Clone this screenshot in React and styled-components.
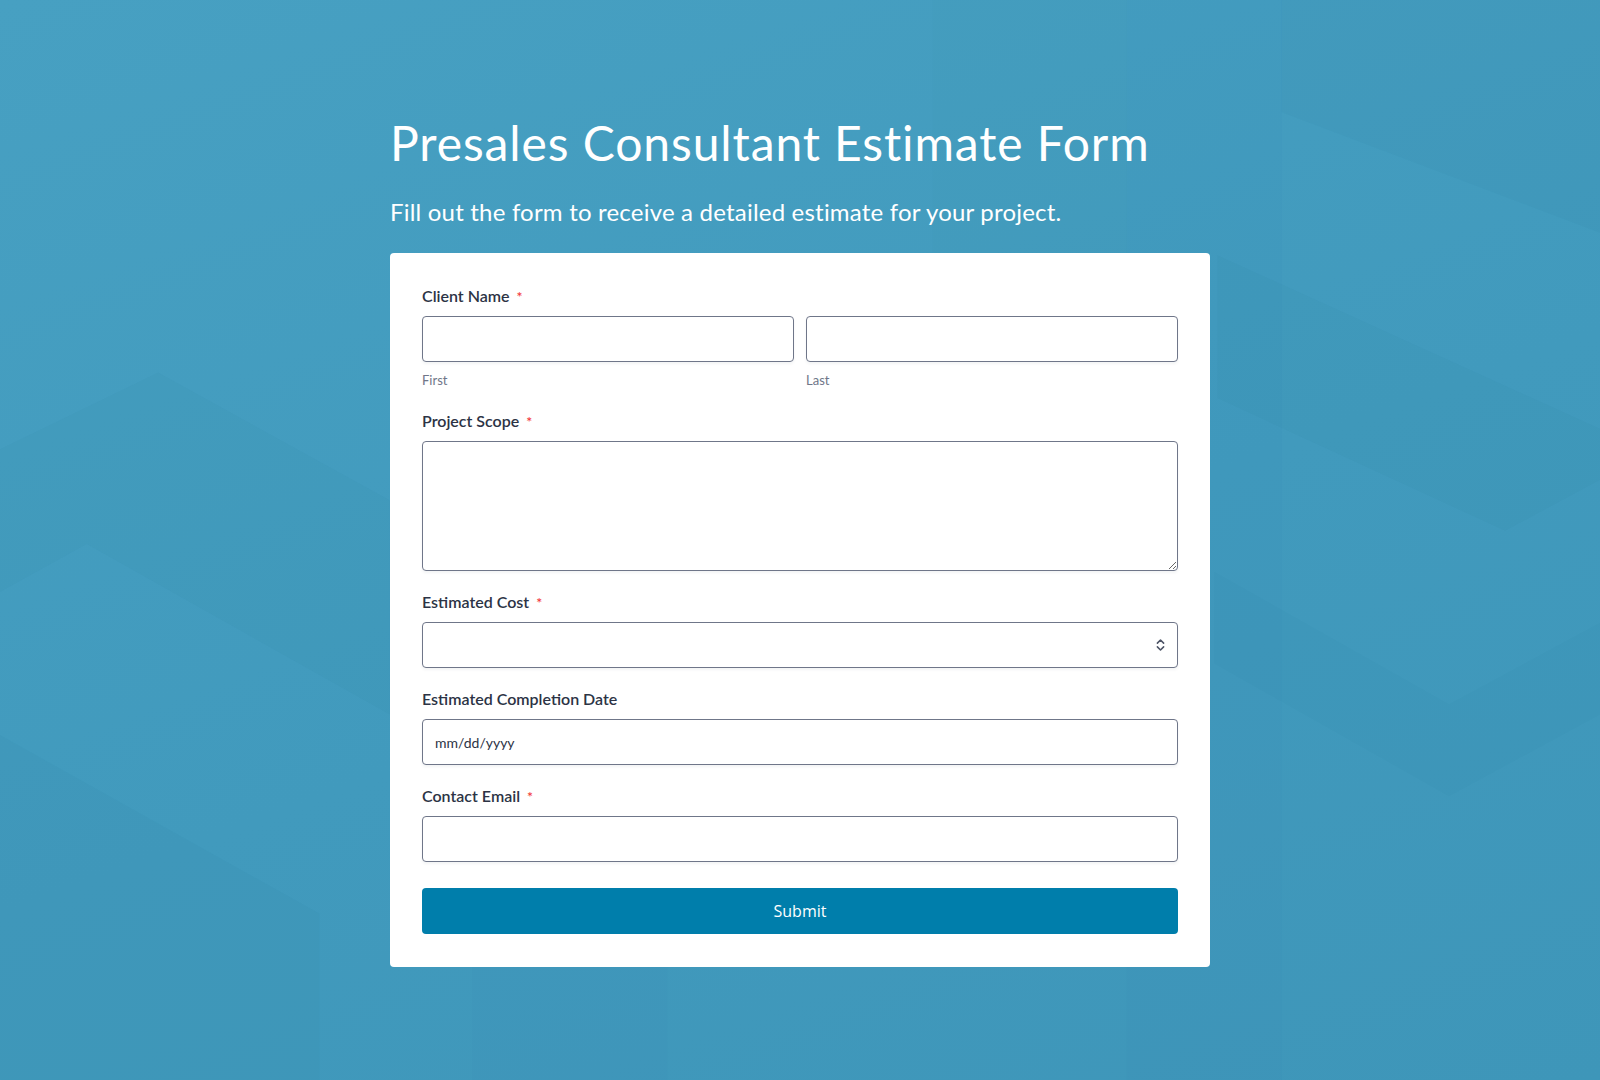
import React from 'react'
import styled, { createGlobalStyle } from 'styled-components'
import { ChevronsUpDown } from 'lucide-react'

const GlobalStyle = createGlobalStyle`
  * { box-sizing: border-box; }
  html, body { margin: 0; padding: 0; }
  body {
    font-family: Lato, "Noto Sans", sans-serif;
    background: #439cbf;
  }
`

const Page = styled.div`
  position: relative;
  min-height: 1080px;
  overflow: hidden;
  background: linear-gradient(160deg, #47a0c2 0%, #419abd 55%, #3e96b9 100%);
`

const Backdrop = styled.svg`
  position: absolute;
  inset: 0;
  width: 100%;
  height: 100%;
  pointer-events: none;
`

const Wrapper = styled.main`
  position: relative;
  width: 820px;
  margin: 0 auto;
  padding: 114px 0 110px;
`

const Title = styled.h1`
  margin: 0;
  font-size: 48px;
  line-height: 1.2;
  font-weight: 400;
  letter-spacing: 0.9px;
  color: #fff;
`

const Subtitle = styled.p`
  margin: 26px 0 27px;
  font-size: 24px;
  line-height: 1.2;
  font-weight: 400;
  letter-spacing: 0.2px;
  color: #fff;
`

const Card = styled.form`
  background: #fff;
  border-radius: 4px;
  padding: 32px 32px 33px;
  display: flex;
  flex-direction: column;
  gap: 20px;
`

const Field = styled.div`
  display: flex;
  flex-direction: column;
`

const Label = styled.label`
  font-size: 16px;
  line-height: 22px;
  height: 22px;
  font-weight: 600;
  color: #2c3345;
  margin-bottom: 9px;
`

const Required = styled.span`
  color: #f23a3c;
  font-size: 14px;
  line-height: 1;
  margin-left: 7px;
`

const Row = styled.div`
  display: grid;
  grid-template-columns: 1fr 1fr;
  gap: 12px;
`

const Sub = styled.span`
  margin-top: 8px;
  font-size: 13px;
  line-height: 20px;
  color: #6f7689;
`

const inputBase = `
  width: 100%;
  border: 1px solid #6f7689;
  border-radius: 4px;
  background: #fff;
  font-family: Lato, "Noto Sans", sans-serif;
  font-size: 14px;
  color: #2c3345;
  outline: none;
  box-shadow: 0 2px 3px rgba(20, 30, 50, 0.05);
`

const Input = styled.input`
  ${inputBase}
  height: 46px;
  padding: 0 12px;
  &::placeholder { color: #2c3345; }
`

const TextArea = styled.textarea`
  ${inputBase}
  height: 130px;
  padding: 10px 12px;
  resize: vertical;
  display: block;
`

const SelectWrap = styled.div`
  position: relative;
`

const Select = styled.select`
  ${inputBase}
  height: 46px;
  padding: 0 12px;
  appearance: none;
`

const SelectIcon = styled.span`
  position: absolute;
  right: 10px;
  top: 50%;
  transform: translateY(-50%);
  display: flex;
  color: #4d5466;
  pointer-events: none;
`

const Submit = styled.button`
  margin-top: 6px;
  height: 46px;
  border: none;
  border-radius: 4px;
  background: #007eab;
  color: #fff;
  font-family: "Open Sans", "DejaVu Sans", sans-serif;
  font-size: 16px;
  font-weight: 500;
  cursor: pointer;
`

const App = () => {
  return (
    <Page>
      <GlobalStyle />
      <Backdrop viewBox="0 0 1568 1058" preserveAspectRatio="none">
        <g fill="#1f6f92">
          <polygon points="1104,0 1256,0 1256,1058 1104,1058" opacity="0.03" />
          <polygon points="1256,0 1568,0 1568,228 1256,110" opacity="0.06" />
          <polygon points="1193,250 1568,420 1568,470 1475,520 1193,390" opacity="0.05" />
          <polygon points="1190,560 1420,690 1568,610 1568,700 1420,780 1190,650" opacity="0.035" />
          <polygon points="155,365 382,490 382,700 85,533 0,580 0,440" opacity="0.05" />
          <polygon points="0,720 313,895 313,1058 0,1058" opacity="0.06" />
          <polygon points="463,940 654,940 654,1058 463,1058" opacity="0.03" />
          <polygon points="914,0 1104,0 1104,250 914,250" opacity="0.025" />
        </g>
      </Backdrop>
      <Wrapper>
        <Title>Presales Consultant Estimate Form</Title>
        <Subtitle>Fill out the form to receive a detailed estimate for your project.</Subtitle>
        <Card onSubmit={e => e.preventDefault()}>
          <Field>
            <Label>Client Name<Required>*</Required></Label>
            <Row>
              <Field>
                <Input type="text" />
                <Sub>First</Sub>
              </Field>
              <Field>
                <Input type="text" />
                <Sub>Last</Sub>
              </Field>
            </Row>
          </Field>
          <Field>
            <Label>Project Scope<Required>*</Required></Label>
            <TextArea />
          </Field>
          <Field>
            <Label>Estimated Cost<Required>*</Required></Label>
            <SelectWrap>
              <Select defaultValue="">
                <option value=""></option>
                <option value="1">Under $10,000</option>
                <option value="2">$10,000 - $50,000</option>
                <option value="3">Over $50,000</option>
              </Select>
              <SelectIcon><ChevronsUpDown size={15} strokeWidth={2.5} /></SelectIcon>
            </SelectWrap>
          </Field>
          <Field>
            <Label>Estimated Completion Date</Label>
            <Input type="text" placeholder="mm/dd/yyyy" />
          </Field>
          <Field>
            <Label>Contact Email<Required>*</Required></Label>
            <Input type="email" />
          </Field>
          <Submit type="submit">Submit</Submit>
        </Card>
      </Wrapper>
    </Page>
  )
}

export default App
